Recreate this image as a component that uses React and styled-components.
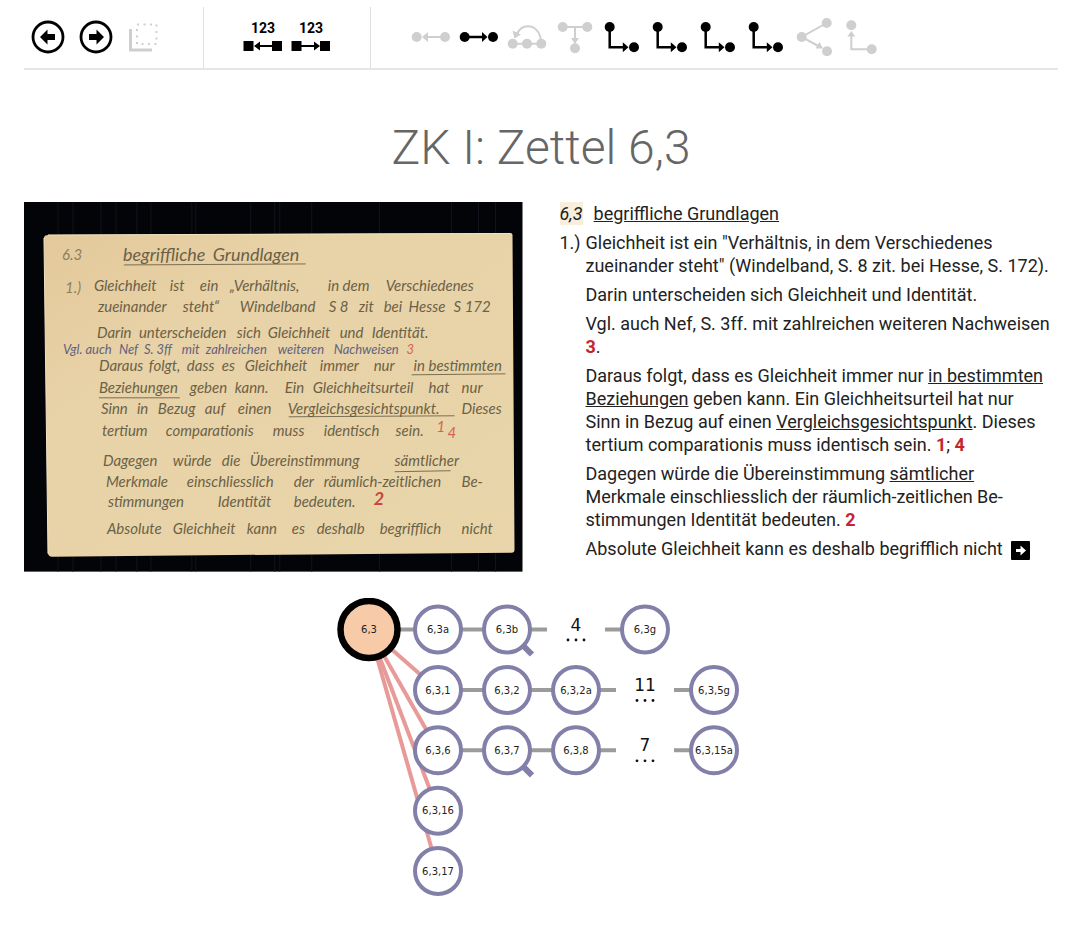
import React from "react";
import styled, { createGlobalStyle } from "styled-components";

const GlobalStyle = createGlobalStyle`
  * { box-sizing: border-box; }
  body {
    margin: 0;
    background: #fff;
    color: #222;
    font-family: Roboto, "Liberation Sans", sans-serif;
  }
`;

const Page = styled.div`
  padding: 7px 22px 24px 24px;
`;

const Toolbar = styled.nav`
  display: flex;
  border-bottom: 2px solid #e6e6e6;
`;

const ToolGroup = styled.div`
  display: flex;
  padding: 0 35px;
  border-right: 1px solid #e0e0e0;
  &:first-child { padding-left: 0; }
  &:last-child { border-right: 0; }
`;

const ToolButton = styled.button`
  width: 48px;
  height: 61px;
  padding: 0;
  border: 0;
  background: none;
  color: ${(p) => (p.disabled ? "#cfcfcf" : "#000")};
  cursor: ${(p) => (p.disabled ? "default" : "pointer")};
  svg { display: block; }
  svg text { font: 700 14px Roboto, sans-serif; }
`;

const Title = styled.h1`
  margin: 49px 0 26px;
  text-align: center;
  font-size: 48px;
  line-height: 57px;
  font-weight: 300;
  color: #666;
`;

const Columns = styled.main`
  display: grid;
  grid-template-columns: 1fr 1fr;
  gap: 37px;
  align-items: start;
`;

const Scan = styled.svg`
  display: block;
  width: 100%;
  height: auto;
  font-family: Lato, sans-serif;
  font-style: italic;
`;

const Transcript = styled.article`
  display: flex;
  flex-direction: column;
  gap: 6px;
  font-size: 18px;
  line-height: 23px;
`;

const Heading = styled.h2`
  display: flex;
  gap: 11px;
  margin: 0;
  font-size: inherit;
  font-weight: 400;
`;

const Signature = styled.em`
  background: #f8eedc;
`;

const Entry = styled.div`
  display: grid;
  grid-template-columns: 26px 1fr;
`;

const Paragraph = styled.p`
  grid-column: 2;
  grid-row: 1;
  margin: 0;
  white-space: nowrap;
`;

const NoteLink = styled.a`
  color: #c4262e;
  font-weight: 700;
  text-decoration: none;
`;

const NextLink = styled.a`
  display: inline-flex;
  margin-left: 4px;
  vertical-align: -5px;
`;

const Tree = styled.svg`
  display: block;
  margin: 26px auto 0;
  max-width: 100%;
  font-family: "DejaVu Sans", sans-serif;
  text-anchor: middle;
`;

const Label = styled.text`
  font-size: 10px;
  fill: #222;
`;

const Count = styled.text`
  font-size: 17px;
  fill: #111;
`;

const Stroke = ({ d, width = 2 }) => (
  <path d={d} fill="none" stroke="currentColor" strokeWidth={width} />
);
const Dot = ({ x, y }) => <circle cx={x} cy={y} r="5" fill="currentColor" />;
const Head = ({ d }) => <path d={d} fill="currentColor" />;

const ICONS = {
  back: (
    <>
      <circle cx="24" cy="37" r="15" fill="none" stroke="currentColor" strokeWidth="2.8" />
      <Head d="M16 37L23.5 29.5V34H31V40H23.5V44.5Z" />
    </>
  ),
  forward: (
    <>
      <circle cx="24" cy="37" r="15" fill="none" stroke="currentColor" strokeWidth="2.8" />
      <Head d="M32 37L24.5 29.5V34H17V40H24.5V44.5Z" />
    </>
  ),
  pile: (
    <>
      <path d="M17 24.5H36.5V44H17Z" fill="none" stroke="currentColor" strokeWidth="2" strokeDasharray="2 4.5" />
      <Stroke d="M10.5 29V50H32" width={3} />
    </>
  ),
  numberBack: (
    <>
      <text x="24" y="33" textAnchor="middle" fill="currentColor">123</text>
      <Head d="M4.5 41H14.5V51H4.5ZM33 41H43V51H33ZM15 46L21 41.5V50.5Z" />
      <Stroke d="M18 46H34" />
    </>
  ),
  numberForward: (
    <>
      <text x="24" y="33" textAnchor="middle" fill="currentColor">123</text>
      <Head d="M4.5 41H14.5V51H4.5ZM33 41H43V51H33ZM33 46L27 41.5V50.5Z" />
      <Stroke d="M14 46H30" />
    </>
  ),
  previous: (
    <>
      <Dot x={10.7} y={37} />
      <Dot x={39} y={37} />
      <Stroke d="M19 37H36" />
      <Head d="M16 37L22 32V42Z" />
    </>
  ),
  next: (
    <>
      <Dot x={10.7} y={37} />
      <Dot x={39} y={37} />
      <Stroke d="M13 37H30" width={2.5} />
      <Head d="M33.5 37L28 32V42Z" />
    </>
  ),
  skip: (
    <>
      <Dot x={10.7} y={43.7} />
      <Dot x={25} y={43.7} />
      <Dot x={39.3} y={43.7} />
      <Stroke d="M11 43.7H39M39 41C38 31 32 26.3 26 26.3C20.5 26.3 17 29.5 15 34" />
      <Head d="M10.5 30.5L12.5 38.5L19 34.5Z" />
    </>
  ),
  up: (
    <>
      <Dot x={12.7} y={27} />
      <Dot x={37.3} y={27} />
      <Dot x={25} y={48.3} />
      <Stroke d="M13 27H37M25 27V41" />
      <Head d="M25 44L21 38H29Z" />
    </>
  ),
  branch: (
    <>
      <Dot x={11.7} y={27} />
      <Stroke d="M11.7 27V47.3H27" width={2.5} />
      <Head d="M24.8 42.3L30.5 47.3L24.8 52.3Z" />
      <Dot x={36} y={47.3} />
    </>
  ),
  fork: (
    <>
      <Dot x={11.7} y={37} />
      <Dot x={36.7} y={23} />
      <Dot x={37} y={51.3} />
      <Stroke d="M36.7 23L11.7 37L31 47.5" />
      <Head d="M33 48.6L29.5 42L25.5 48.5Z" />
    </>
  ),
  rise: (
    <>
      <Dot x={13.3} y={25.2} />
      <Dot x={33.7} y={49.3} />
      <Stroke d="M33 49.3H13.3V34" />
      <Head d="M13.3 31L9.3 36.5H17.3Z" />
    </>
  ),
};

const TOOL_GROUPS = [
  [
    { icon: "back", label: "Zurück" },
    { icon: "forward", label: "Vor" },
    { icon: "pile", label: "Stapel", off: true },
  ],
  [
    { icon: "numberBack", label: "Vorherige Nummer" },
    { icon: "numberForward", label: "Nächste Nummer" },
  ],
  [
    { icon: "previous", label: "Vorheriger Zettel", off: true },
    { icon: "next", label: "Nächster Zettel" },
    { icon: "skip", label: "Reihe überspringen", off: true },
    { icon: "up", label: "Zur übergeordneten Reihe", off: true },
    { icon: "branch", label: "Abzweigung 1" },
    { icon: "branch", label: "Abzweigung 2" },
    { icon: "branch", label: "Abzweigung 3" },
    { icon: "branch", label: "Abzweigung 4" },
    { icon: "fork", label: "Verzweigung", off: true },
    { icon: "rise", label: "Zum Ursprung", off: true },
  ],
];

// Each handwritten line: baseline followed by its words with their start positions.
const INK = "#5e553c";
const BLUE = "#55557c";
const RED = "#cf5a4c";
const HANDWRITING = [
  { y: 58, words: [[38, "6.3"]], soft: true },
  { y: 59, words: [[99, "begriffliche"], [189, "Grundlagen"]], size: 18 },
  { y: 91, words: [[41, "1.)"]], soft: true },
  { y: 89, words: [[70, "Gleichheit"], [146, "ist"], [176, "ein"], [206, "„Verhältnis,"], [304, "in dem"], [362, "Verschiedenes"]] },
  { y: 110, words: [[74, "zueinander"], [159, "steht“"], [216, "Windelband"], [305, "S 8"], [335, "zit"], [360, "bei"], [385, "Hesse"], [430, "S 172"]] },
  { y: 136, words: [[73, "Darin"], [115, "unterscheiden"], [213, "sich"], [244, "Gleichheit"], [316, "und"], [348, "Identität."]] },
  { y: 152, words: [[39, "Vgl. auch"], [95, "Nef"], [120, "S. 3ff"], [158, "mit"], [182, "zahlreichen"], [254, "weiteren"], [310, "Nachweisen"]], color: BLUE, size: 13 },
  { y: 152, words: [[383, "3"]], color: RED, size: 13 },
  { y: 169, words: [[75, "Daraus"], [125, "folgt,"], [163, "dass"], [198, "es"], [221, "Gleichheit"], [296, "immer"], [350, "nur"], [390, "in bestimmten"]] },
  { y: 191, words: [[75, "Beziehungen"], [166, "geben"], [211, "kann."], [261, "Ein"], [289, "Gleichheitsurteil"], [405, "hat"], [438, "nur"]] },
  { y: 212, words: [[77, "Sinn"], [113, "in"], [134, "Bezug"], [181, "auf"], [214, "einen"], [264, "Vergleichsgesichtspunkt."], [438, "Dieses"]] },
  { y: 234, words: [[78, "tertium"], [142, "comparationis"], [249, "muss"], [300, "identisch"], [372, "sein."]] },
  { y: 230, words: [[413, "1"]], color: RED },
  { y: 236, words: [[424, "4"]], color: RED },
  { y: 264, words: [[79, "Dagegen"], [149, "würde"], [198, "die"], [226, "Übereinstimmung"], [371, "sämtlicher"]] },
  { y: 285, words: [[82, "Merkmale"], [163, "einschliesslich"], [270, "der"], [300, "räumlich-zeitlichen"], [438, "Be-"]] },
  { y: 305, words: [[84, "stimmungen"], [194, "Identität"], [270, "bedeuten."]] },
  { y: 303, words: [[350, "2"]], color: "#c8362e", size: 18, bold: true },
  { y: 332, words: [[83, "Absolute"], [149, "Gleichheit"], [223, "kann"], [268, "es"], [293, "deshalb"], [356, "begrifflich"], [438, "nicht"]] },
];

const STREAKS = [34, 49, 77, 92, 113, 127, 168, 172, 227, 251, 256, 288, 356, 428, 455, 472];

function CardScan() {
  return (
    <Scan viewBox="0 0 499 370" role="img" aria-label="Handschriftlicher Zettel 6,3">
      <defs>
        <linearGradient id="paper" x1="0" y1="0" x2="1" y2="1">
          <stop offset="0" stopColor="#e3c99b" />
          <stop offset="0.3" stopColor="#e8d2a7" />
          <stop offset="1" stopColor="#e9d5aa" />
        </linearGradient>
      </defs>
      <rect width="499" height="370" fill="#030408" />
      {STREAKS.map((x) => (
        <path key={x} d={`M${x} 0V370`} stroke="#11141c" />
      ))}
      <path d="M20 35Q21 33 24 33L487 31Q489 31 489 33L491 348Q491 351 488 351L28 355Q25 355 24 352Z" fill="url(#paper)" />
      <path d="M24 33L487 31.5M24 352L20 36" stroke="#f3e3c3" fill="none" />
      <g fill="none" stroke={INK} opacity="0.8">
        <path d="M100 63L282 62M388 173L482 172M75 196H156M265 215L431 214M371 270L427 269" />
      </g>
      {HANDWRITING.map((line, i) => (
        <text
          key={i}
          y={line.y}
          fill={line.color || INK}
          opacity={line.soft ? 0.65 : 0.9}
          fontSize={line.size || 15}
          fontWeight={line.bold ? 700 : 400}
        >
          {line.words.map(([x, word]) => (
            <tspan key={x} x={x}>{word}</tspan>
          ))}
        </text>
      ))}
    </Scan>
  );
}

const COL = (n) => 101 + 69 * n;
const ROWS = [31.5, 92, 152.3, 212.7, 273];
const NODES = [
  [0, 0, "6,3a"], [1, 0, "6,3b", true], [3, 0, "6,3g"],
  [0, 1, "6,3,1"], [1, 1, "6,3,2"], [2, 1, "6,3,2a"], [4, 1, "6,3,5g"],
  [0, 2, "6,3,6"], [1, 2, "6,3,7", true], [2, 2, "6,3,8"], [4, 2, "6,3,15a"],
  [0, 3, "6,3,16"],
  [0, 4, "6,3,17"],
];
const GAPS = [[2, 0, "4"], [3, 1, "11"], [3, 2, "7"]];

function ZettelTree() {
  return (
    <Tree width="408" height="300" viewBox="0 0 408 300">
      <g stroke="#e79a97" strokeWidth="4">
        {ROWS.slice(1).map((y) => (
          <line key={y} x1="32" y1={ROWS[0]} x2={COL(0)} y2={y} />
        ))}
      </g>
      <g stroke="#9b9b9b" strokeWidth="4">
        <line x1="32" y1={ROWS[0]} x2={COL(0)} y2={ROWS[0]} />
        {GAPS.map(([col, row]) => (
          <path key={row} d={`M${COL(0)} ${ROWS[row]}H${COL(col) - 29}M${COL(col) + 29} ${ROWS[row]}H${COL(col + 1)}`} />
        ))}
      </g>
      <circle cx="32" cy={ROWS[0]} r="28.5" fill="#f8cba8" stroke="#000" strokeWidth="6.5" />
      <Label x="32" y={ROWS[0] + 3.5}>6,3</Label>
      {NODES.map(([col, row, name, more]) => (
        <a key={name} href={`#${name}`}>
          {more && (
            <path
              d={`M${COL(col) + 16} ${ROWS[row] + 16}L${COL(col) + 25} ${ROWS[row] + 25}`}
              stroke="#827fa9"
              strokeWidth="6"
            />
          )}
          <circle cx={COL(col)} cy={ROWS[row]} r="23" fill="#fff" stroke="#827fa9" strokeWidth="4" />
          <Label x={COL(col)} y={ROWS[row] + 3.5}>{name}</Label>
        </a>
      ))}
      {GAPS.map(([col, row, count]) => (
        <g key={row}>
          <Count x={COL(col)} y={ROWS[row] + 1}>{count}</Count>
          {[-8, 0, 8].map((dx) => (
            <circle key={dx} cx={COL(col) + dx} cy={ROWS[row] + 10.5} r="1.4" fill="#111" />
          ))}
        </g>
      ))}
    </Tree>
  );
}

export default function App() {
  return (
    <Page>
      <GlobalStyle />
      <Toolbar>
        {TOOL_GROUPS.map((tools, g) => (
          <ToolGroup key={g}>
            {tools.map((tool) => (
              <ToolButton key={tool.label} type="button" aria-label={tool.label} disabled={tool.off}>
                <svg width="48" height="61" viewBox="0 7 48 61">{ICONS[tool.icon]}</svg>
              </ToolButton>
            ))}
          </ToolGroup>
        ))}
      </Toolbar>
      <Title>ZK I: Zettel 6,3</Title>
      <Columns>
        <CardScan />
        <Transcript>
          <Heading><Signature>6,3</Signature><u>begriffliche Grundlagen</u></Heading>
          <Entry>
            <span>1.)</span>
            <Paragraph>
              Gleichheit ist ein "Verhältnis, in dem Verschiedenes<br />
              zueinander steht" (Windelband, S. 8 zit. bei Hesse, S. 172).
            </Paragraph>
          </Entry>
          <Entry><Paragraph>Darin unterscheiden sich Gleichheit und Identität.</Paragraph></Entry>
          <Entry>
            <Paragraph>
              Vgl. auch Nef, S. 3ff. mit zahlreichen weiteren Nachweisen<br />
              <NoteLink href="#note-3">3</NoteLink>.
            </Paragraph>
          </Entry>
          <Entry>
            <Paragraph>
              Daraus folgt, dass es Gleichheit immer nur <u>in bestimmten</u><br />
              <u>Beziehungen</u> geben kann. Ein Gleichheitsurteil hat nur<br />
              Sinn in Bezug auf einen <u>Vergleichsgesichtspunkt</u>. Dieses<br />
              tertium comparationis muss identisch sein.{" "}
              <NoteLink href="#note-1">1</NoteLink>; <NoteLink href="#note-4">4</NoteLink>
            </Paragraph>
          </Entry>
          <Entry>
            <Paragraph>
              Dagegen würde die Übereinstimmung <u>sämtlicher</u><br />
              Merkmale einschliesslich der räumlich-zeitlichen Be-<br />
              stimmungen Identität bedeuten. <NoteLink href="#note-2">2</NoteLink>
            </Paragraph>
          </Entry>
          <Entry>
            <Paragraph>
              Absolute Gleichheit kann es deshalb begrifflich nicht{" "}
              <NextLink href="#next" aria-label="Weiter">
                <svg width="19" height="19" viewBox="0 0 19 19">
                  <rect width="19" height="19" rx="1" fill="#000" />
                  <path d="M5 8H9.5V4.5L15 9.5L9.5 14.5V11H5Z" fill="#fff" />
                </svg>
              </NextLink>
            </Paragraph>
          </Entry>
        </Transcript>
      </Columns>
      <ZettelTree />
    </Page>
  );
}
